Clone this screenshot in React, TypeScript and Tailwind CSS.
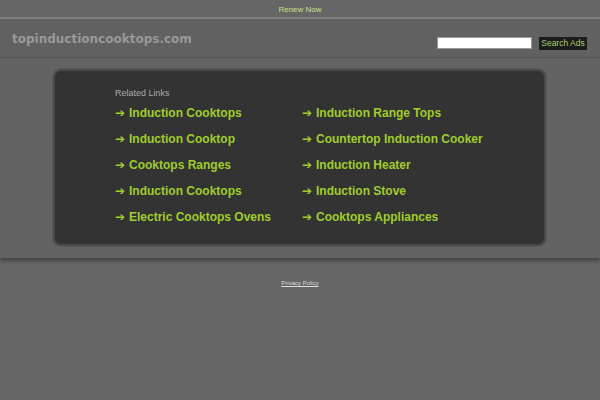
import React from "react";

const left = [
  "Induction Cooktops",
  "Induction Cooktop",
  "Cooktops Ranges",
  "Induction Cooktops",
  "Electric Cooktops Ovens",
];
const right = [
  "Induction Range Tops",
  "Countertop Induction Cooker",
  "Induction Heater",
  "Induction Stove",
  "Cooktops Appliances",
];

function LinkItem({ text }: { text: string }) {
  return (
    <div className="flex items-center h-[26px] text-[12px] font-bold text-[#9fcd2c] leading-none">
      <span className="w-[14px] shrink-0 text-[12px] font-normal" style={{ fontFamily: '"DejaVu Sans", sans-serif' }}>➔</span>
      <span>{text}</span>
    </div>
  );
}

export default function App() {
  return (
    <div
      className="w-[600px] h-[400px] bg-[#666666] overflow-hidden"
      style={{ fontFamily: '"Liberation Sans", Arial, sans-serif' }}
    >
      <div className="h-[17px] flex items-center justify-center text-[8px] text-[#cbe28a] pt-[2px]">
        Renew Now
      </div>
      <div className="h-[2px] bg-[#808080]" />
      <div className="h-[39px] bg-[#616161] flex items-center justify-between pl-[12px] pr-[13px] border-b border-[#555555]">
        <div
          className="text-[12px] font-bold text-[#999999] mt-[1px]"
          style={{ fontFamily: '"DejaVu Sans", sans-serif' }}
        >
          topinductioncooktops.com
        </div>
        <div className="flex items-center gap-[7px] mt-[10px]">
          <div className="w-[95px] h-[12px] bg-white border border-[#999]" />
          <div className="h-[13px] w-[48px] bg-[#1c1c1c] text-[8.5px] text-[#a8cf6a] flex items-center justify-center whitespace-nowrap">
            Search Ads
          </div>
        </div>
      </div>
      <div className="h-[200px] bg-[#636363] pt-[11px] pl-[53px] shadow-[0_3px_4px_rgba(0,0,0,0.35)] relative">
        <div className="w-[493px] h-[177px] rounded-[8px] bg-[#333333] border-[2px] border-[#4a4a4a] shadow-[0_0_0_1px_#5a5a5a] pl-[60px] pt-[18px]">
          <div className="text-[9px] text-[#aaaaaa] leading-none mb-[2px]">Related Links</div>
          <div className="flex">
            <div className="w-[187px]">
              {left.map((t, i) => (
                <LinkItem key={i} text={t} />
              ))}
            </div>
            <div>
              {right.map((t, i) => (
                <LinkItem key={i} text={t} />
              ))}
            </div>
          </div>
        </div>
      </div>
      <div className="flex justify-center pt-[21px]">
        <a className="text-[6px] text-[#dddddd] underline">Privacy Policy</a>
      </div>
    </div>
  );
}
